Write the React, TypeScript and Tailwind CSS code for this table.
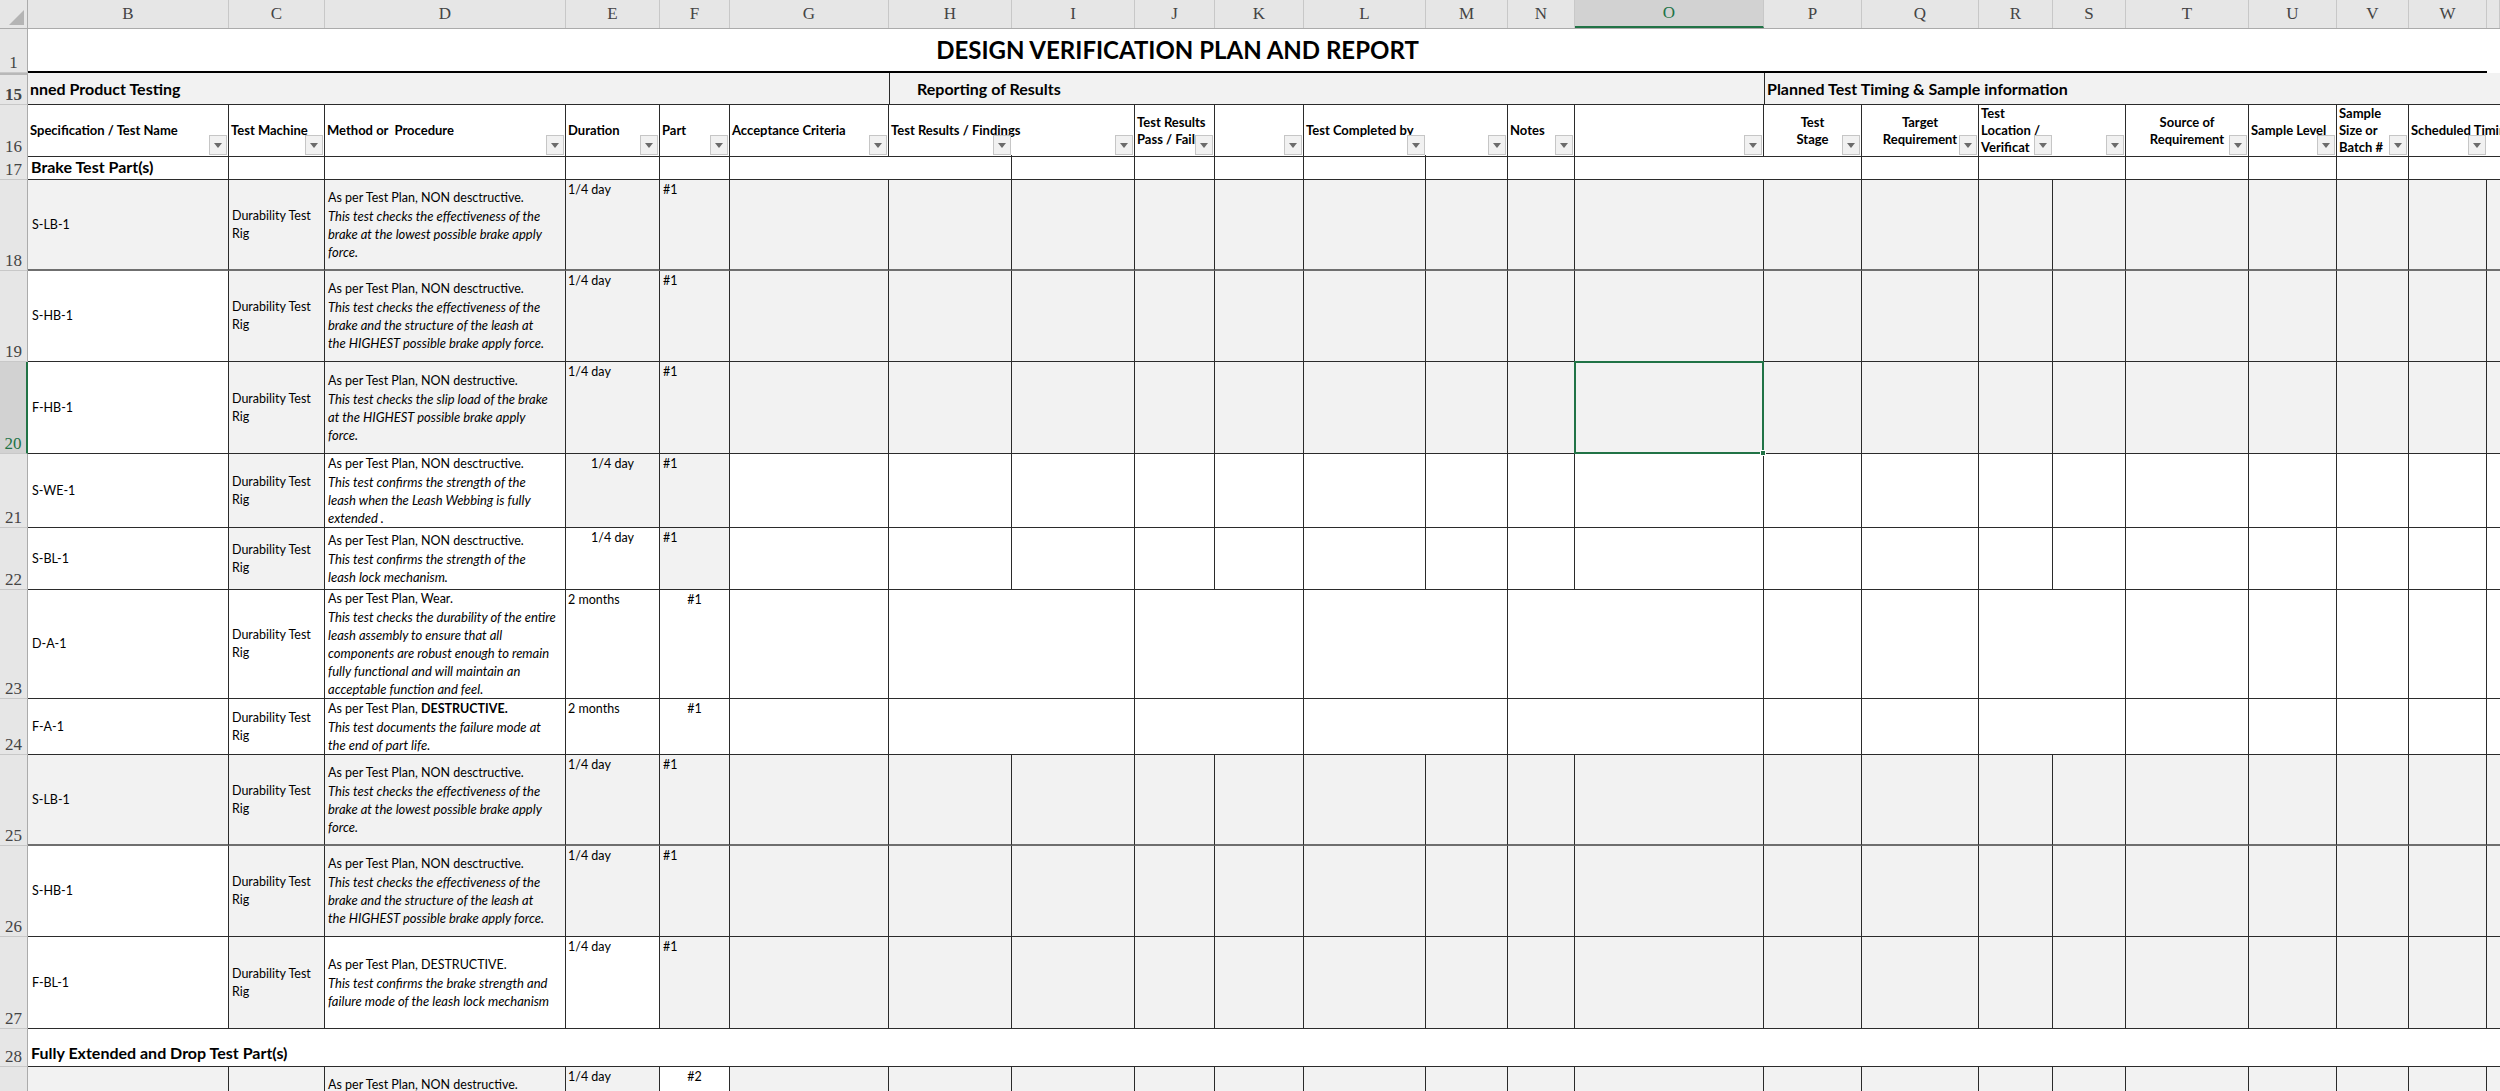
import type { ReactNode } from "react"

// 28px row header + columns B..X
const GRID =
  "grid grid-cols-[28px_201px_96px_241px_94px_70px_159px_123px_123px_80px_89px_122px_82px_67px_189px_98px_117px_74px_73px_123px_88px_72px_78px_13px]"

const LETTERS = ["B", "C", "D", "E", "F", "G", "H", "I", "J", "K", "L", "M", "N", "O", "P", "Q", "R", "S", "T", "U", "V", "W", ""]

const LINE = "border-[#2b2b2b]"

function FilterButton() {
  return (
    <span className="absolute bottom-[1px] right-[1px] flex h-[20px] w-[18px] items-center justify-center border border-[#c6c6c6] bg-[#f1f1f1]">
      <svg width="8" height="5" viewBox="0 0 8 5">
        <path d="M0 0h8L4 5z" fill="#6b6b6b" />
      </svg>
    </span>
  )
}

function RowNum({ n, active, hidden }: { n: string; active?: boolean; hidden?: boolean }) {
  return (
    <div
      className={`flex items-end justify-center pb-[1px] font-['Liberation_Serif',serif] text-[17px] leading-none border-b border-b-[#c8c8c8] ${
        active
          ? "border-r-2 border-r-[#217346] bg-[#d2d2d2] text-[#217346]"
          : "border-r border-r-[#ababab] bg-[#e6e6e6] text-[#444]"
      } ${hidden ? "border-t-2 border-t-[#b8b8b8]" : ""}`}
    >
      {n}
    </div>
  )
}

type Head = { lines?: string[]; center?: boolean; line?: boolean; filter?: boolean }

const HEADS: Head[] = [
  { lines: ["Specification / Test Name"], line: true },
  { lines: ["Test Machine"], line: true },
  { lines: ["Method or  Procedure"], line: true },
  { lines: ["Duration"], line: true },
  { lines: ["Part"], line: true },
  { lines: ["Acceptance Criteria"], line: true },
  { lines: ["Test Results / Findings"] },
  { line: true },
  { lines: ["Test Results", "Pass / Fail"], line: true },
  { line: true },
  { lines: ["Test Completed by"] },
  { line: true },
  { lines: ["Notes"], line: true },
  { line: true },
  { lines: ["Test", "Stage"], center: true, line: true },
  { lines: ["Target", "Requirement"], center: true, line: true },
  { lines: ["Test", "Location /", "Verificat"] },
  { line: true },
  { lines: ["Source of", "Requirement"], center: true, line: true },
  { lines: ["Sample Level"], line: true },
  { lines: ["Sample", "Size or", "Batch #"], line: true },
  { lines: ["Scheduled Timing"] },
  { filter: false },
]

// B..X, right border in row 17
const ROW17 = [true, true, true, true, true, false, true, true, true, true, true, true, true, false, true, true, false, true, true, true, true, false, false]

type Body = {
  n: string
  h: string
  left: string
  right: "g" | "w"
  id?: string
  machine?: boolean
  head?: ReactNode
  lines: string[]
  dur?: string
  durCenter?: boolean
  part?: string
  partCenter?: boolean
  merged?: boolean
  active?: boolean
  topText?: boolean
  thick?: boolean
}

const L_EFFECT = ["This test checks the effectiveness of the", "brake at the lowest possible brake apply", "force."]
const H_EFFECT = ["This test checks the effectiveness of the", "brake and the structure of the leash at", "the HIGHEST possible brake apply force."]

const ROWS: Body[] = [
  { n: "18", h: "h-[91px]", left: "ggggg", right: "g", id: "S-LB-1", machine: true, head: "As per Test Plan, NON desctructive.", lines: L_EFFECT, dur: "1/4 day", part: "#1", thick: true },
  { n: "19", h: "h-[91px]", left: "wgggg", right: "g", id: "S-HB-1", machine: true, head: "As per Test Plan, NON desctructive.", lines: H_EFFECT, dur: "1/4 day", part: "#1" },
  {
    n: "20", h: "h-[92px]", left: "wgggg", right: "g", id: "F-HB-1", machine: true, head: "As per Test Plan, NON destructive.",
    lines: ["This test checks the slip load of the brake", "at the HIGHEST possible brake apply", "force."], dur: "1/4 day", part: "#1", active: true,
  },
  {
    n: "21", h: "h-[74px]", left: "wgwgg", right: "w", id: "S-WE-1", machine: true, head: "As per Test Plan, NON desctructive.",
    lines: ["This test confirms the strength of the", "leash when the Leash Webbing is fully", "extended ."], dur: "1/4 day", durCenter: true, part: "#1",
  },
  {
    n: "22", h: "h-[62px]", left: "wgwwg", right: "w", id: "S-BL-1", machine: true, head: "As per Test Plan, NON desctructive.",
    lines: ["This test confirms the strength of the", "leash lock mechanism."], dur: "1/4 day", durCenter: true, part: "#1",
  },
  {
    n: "23", h: "h-[109px]", left: "wwwww", right: "w", id: "D-A-1", machine: true, head: "As per Test Plan, Wear.",
    lines: ["This test checks the durability of the entire", "leash assembly to ensure that all", "components are robust enough to remain", "fully functional and will maintain an", "acceptable function and feel."],
    dur: "2 months", part: "#1", partCenter: true, merged: true,
  },
  {
    n: "24", h: "h-[56px]", left: "wwwww", right: "w", id: "F-A-1", machine: true,
    head: (
      <>
        As per Test Plan, <b>DESTRUCTIVE.</b>
      </>
    ),
    lines: ["This test documents the failure mode at", "the end of part life."], dur: "2 months", part: "#1", partCenter: true, merged: true,
  },
  { n: "25", h: "h-[91px]", left: "ggggg", right: "g", id: "S-LB-1", machine: true, head: "As per Test Plan, NON desctructive.", lines: L_EFFECT, dur: "1/4 day", part: "#1", thick: true },
  { n: "26", h: "h-[91px]", left: "wgggg", right: "g", id: "S-HB-1", machine: true, head: "As per Test Plan, NON desctructive.", lines: H_EFFECT, dur: "1/4 day", part: "#1" },
  {
    n: "27", h: "h-[92px]", left: "wgwwg", right: "g", id: "F-BL-1", machine: true, head: "As per Test Plan, DESTRUCTIVE.",
    lines: ["This test confirms the brake strength and", "failure mode of the leash lock mechanism"], dur: "1/4 day", part: "#1",
  },
]

const LAST: Body = {
  n: "29", h: "h-[91px]", left: "ggggw", right: "g", head: "As per Test Plan, NON destructive.", lines: [], dur: "1/4 day", part: "#2", partCenter: true, topText: true,
}

const NORMAL = [1, 1, 1, 1, 1, 1, 1, 1, 1, 1, 1, 1, 1, 1, 1, 1, 1, 1]
const MERGED = [1, 2, 2, 2, 2, 1, 1, 2, 1, 1, 1, 1, 1]

const fill = (c: string) => (c === "g" ? "bg-[#f2f2f2]" : "bg-white")

function DataRow({ r }: { r: Body }) {
  const spans = r.merged ? MERGED : NORMAL
  const bottom = r.thick ? "border-b-2 border-b-[#6f6f6f]" : "border-b"
  return (
    <div className={`${GRID} ${r.h} text-[12.5px] leading-[18px]`}>
      <RowNum n={r.n} active={r.active} />
      <div className={`flex items-center border-r pl-[4px] ${LINE} ${bottom} ${fill(r.left[0])}`}>{r.id}</div>
      <div className={`flex flex-col justify-center border-r pl-[3px] ${LINE} ${bottom} ${fill(r.left[1])}`}>
        {r.machine && (
          <>
            <span>Durability Test</span>
            <span>Rig</span>
          </>
        )}
      </div>
      <div
        className={`flex flex-col whitespace-nowrap border-r pl-[3px] ${LINE} ${bottom} ${fill(r.left[2])} ${
          r.topText ? "justify-start pt-[9px]" : "justify-center"
        }`}
      >
        <span>{r.head}</span>
        {r.lines.map((l) => (
          <span key={l} className="text-[13px] italic">
            {l}
          </span>
        ))}
      </div>
      <div className={`flex border-r pt-[1px] ${LINE} ${bottom} ${fill(r.left[3])} ${r.durCenter ? "justify-center" : "pl-[2px]"}`}>
        <span>{r.dur}</span>
      </div>
      <div className={`flex border-r pt-[1px] ${LINE} ${bottom} ${fill(r.left[4])} ${r.partCenter ? "justify-center" : "pl-[3px]"}`}>
        <span>{r.part}</span>
      </div>
      {spans.map((s, i) => {
        const last = i === spans.length - 1
        const selected = r.active && i === 8
        return (
          <div
            key={i}
            className={`${LINE} ${bottom} ${fill(r.right)} ${last ? "" : "border-r"} ${s === 2 ? "col-span-2" : ""} ${selected ? "relative" : ""}`}
          >
            {selected && (
              <div className="absolute -top-[1px] -left-[1px] -right-[1px] -bottom-[1px] border-2 border-[#217346]">
                <span className="absolute -bottom-[4px] -right-[4px] h-[6px] w-[6px] border border-white bg-[#217346]" />
              </div>
            )}
          </div>
        )
      })}
    </div>
  )
}

export default function App() {
  return (
    <div className="h-[1091px] w-[2500px] overflow-hidden bg-white font-['Lato',sans-serif] text-black">
      {/* column letters */}
      <div className={`${GRID} h-[29px] border-b border-b-[#ababab] bg-[#e6e6e6]`}>
        <div className="relative border-r border-r-[#ababab]">
          <svg className="absolute bottom-[3px] right-[3px]" width="15" height="15" viewBox="0 0 15 15">
            <path d="M15 0V15H0Z" fill="#b4b4b4" />
          </svg>
        </div>
        {LETTERS.map((l, i) => (
          <div
            key={i}
            className={`flex items-center justify-center border-r border-r-[#c8c8c8] font-['Liberation_Serif',serif] text-[17px] ${
              l === "O" ? "border-b-2 border-b-[#217346] bg-[#d2d2d2] text-[#217346]" : "text-[#444]"
            }`}
          >
            {l}
          </div>
        ))}
      </div>

      {/* row 1 title */}
      <div className={`${GRID} h-[44px]`}>
        <RowNum n="1" />
        <div className="col-[2/24] row-start-1 border-b-2 border-black" />
        <div className="col-[3/20] row-start-1 flex items-center justify-center pb-[2px] text-[24px] font-bold">
          DESIGN VERIFICATION PLAN AND REPORT
        </div>
      </div>

      {/* row 15 groups */}
      <div className={`${GRID} h-[32px] text-[16px] font-bold`}>
        <RowNum n="15" hidden />
        <div className={`col-[2/8] flex items-center border-b bg-[#f2f2f2] pl-[2px] ${LINE}`}>nned Product Testing</div>
        <div className={`col-[8/16] flex items-center border-b border-l bg-[#f2f2f2] pl-[27px] ${LINE}`}>Reporting of Results</div>
        <div className={`col-[16/25] flex items-center border-b border-l bg-[#f2f2f2] pl-[2px] ${LINE}`}>
          Planned Test Timing &amp; Sample information
        </div>
      </div>

      {/* row 16 headings with filters */}
      <div className={`${GRID} h-[50px] bg-white`}>
        <RowNum n="16" />
        {HEADS.map((h, i) => (
          <div
            key={i}
            className={`relative flex flex-col justify-center whitespace-pre border-b text-[13px] font-bold leading-[17px] ${LINE} ${
              h.line ? "border-r" : ""
            } ${h.center ? "items-center text-center" : "pl-[2px]"}`}
          >
            {h.lines?.map((l) => (
              <span key={l}>{l}</span>
            ))}
            {h.filter !== false && <FilterButton />}
          </div>
        ))}
      </div>

      {/* row 17 section */}
      <div className={`${GRID} h-[25px]`}>
        <RowNum n="17" />
        {ROW17.map((line, i) => (
          <div key={i} className={`flex items-center border-b ${LINE} ${line ? "border-r" : ""} ${i === 0 ? "pl-[3px] text-[16px] font-bold" : ""}`}>
            {i === 0 ? "Brake Test Part(s)" : null}
          </div>
        ))}
      </div>

      {ROWS.map((r) => (
        <DataRow key={r.n} r={r} />
      ))}

      {/* row 28 section */}
      <div className={`${GRID} h-[38px]`}>
        <RowNum n="28" />
        <div className={`col-[2/25] flex items-end border-b pb-[1px] pl-[3px] text-[16px] font-bold ${LINE}`}>
          Fully Extended and Drop Test Part(s)
        </div>
      </div>

      <DataRow r={LAST} />
    </div>
  )
}
